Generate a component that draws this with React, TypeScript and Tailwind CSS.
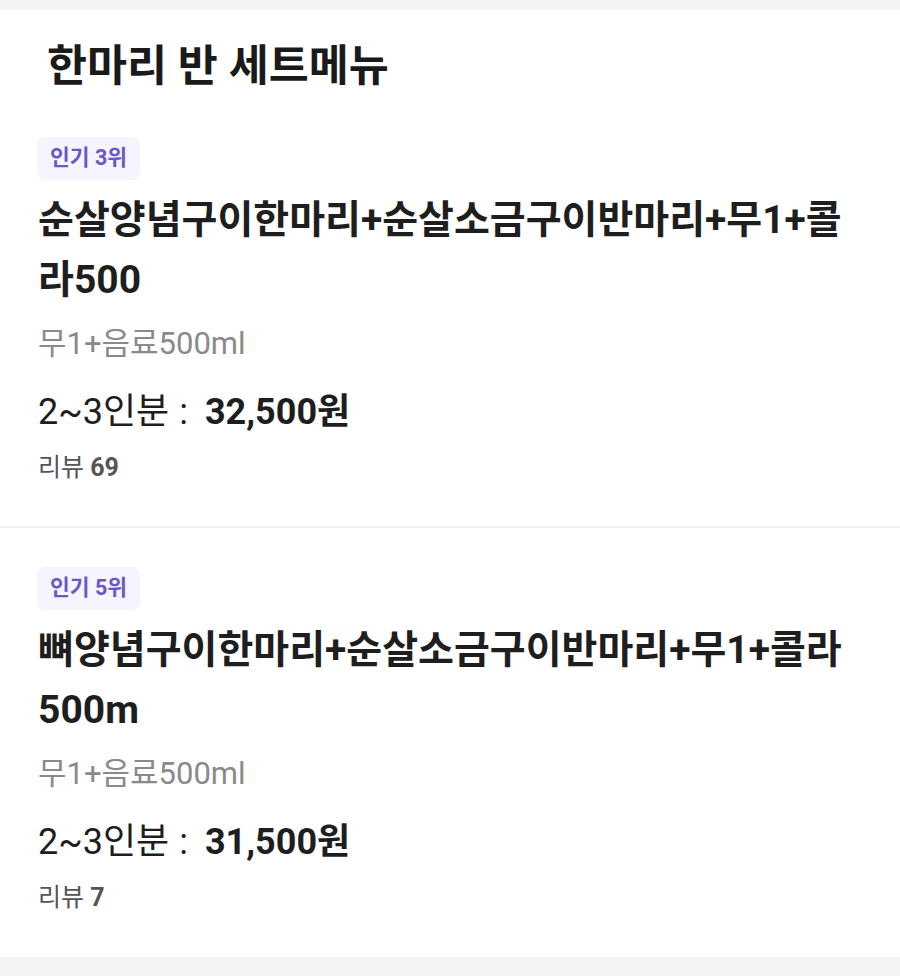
export default function App() {
  const items = [
    { rank: "인기 3위", name: "순살양념구이한마리+순살소금구이반마리+무1+콜라500", desc: "무1+음료500ml", price: "32,500원", review: "69" },
    { rank: "인기 5위", name: "뼈양념구이한마리+순살소금구이반마리+무1+콜라500m", desc: "무1+음료500ml", price: "31,500원", review: "7" },
  ];
  return (
    <div className="w-[900px] h-[976px] bg-[#f2f3f5] pt-[10px] overflow-hidden" style={{ fontFamily: "Roboto, 'Noto Sans CJK KR', sans-serif" }}>
      <div className="bg-white">
        <div className="pt-[33px] pl-[47px]">
          <h1 className="text-[43.5px] leading-[48px] font-bold text-[#1a1a1a]">한마리 반 세트메뉴</h1>
        </div>
        {items.map((it, i) => (
          <div key={i} className={i === 0 ? "pl-[38px] pr-[40px] pt-[46px] pb-[43px] border-b-2 border-[#f2f2f2]" : "pl-[38px] pr-[40px] pt-[39px] pb-[44px]"}>
            <span className="inline-flex items-center h-[43px] px-[13px] -ml-[1px] rounded-[8px] bg-[#f6f4ff] text-[#6a57c9] text-[21.5px] font-bold">{it.rank}</span>
            <div className="mt-[10px] text-[39px] leading-[60px] font-bold text-[#1e1e1e] break-all">{it.name}</div>
            <div className="mt-[14px] text-[31px] leading-[40px] text-[#8a8a8a]">{it.desc}</div>
            <div className="mt-[28px] text-[36px] leading-[40px] text-[#1e1e1e]">
              2~3인분<span className="ml-[10px] mr-[17px]">:</span><span className="font-bold">{it.price}</span>
            </div>
            <div className="mt-[21px] text-[25px] leading-[30px] text-[#555555]">
              리뷰 <span className="font-bold">{it.review}</span>
            </div>
          </div>
        ))}
      </div>
    </div>
  );
}
